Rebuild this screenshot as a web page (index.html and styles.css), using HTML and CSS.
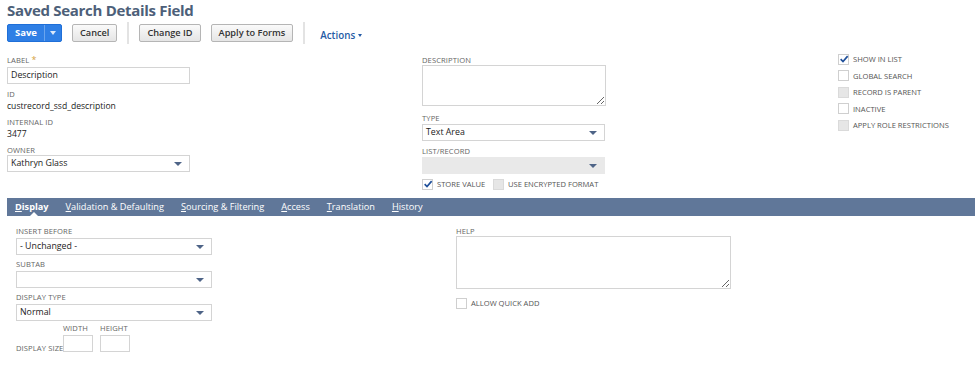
FILE: index.html
```html
<!DOCTYPE html>
<html lang="en">
<head>
    <meta charset="UTF-8">
    <title>Saved Search Details Field</title>
    <link rel="stylesheet" href="styles.css">
</head>
<body>
    <h1 class="page-title">Saved Search Details Field</h1>

    <div class="toolbar">
        <div class="btn-split">
            <span class="btn-save">Save</span>
            <span class="btn-save-menu"><i class="tri tri-white"></i></span>
        </div>
        <span class="btn">Cancel</span>
        <span class="sep"></span>
        <span class="btn">Change ID</span>
        <span class="btn">Apply to Forms</span>
        <span class="sep"></span>
        <span class="actions">Actions <i class="tri tri-blue"></i></span>
    </div>

    <!-- Main fields -->
    <div class="main-fields">
        <div class="col col-left">
            <div class="field">
                <div class="lbl">Label <span class="req">*</span></div>
                <div class="input">Description</div>
            </div>
            <div class="field">
                <div class="lbl">ID</div>
                <div class="val">custrecord_ssd_description</div>
            </div>
            <div class="field">
                <div class="lbl">Internal ID</div>
                <div class="val">3477</div>
            </div>
            <div class="field">
                <div class="lbl">Owner</div>
                <div class="select">Kathryn Glass<i class="tri tri-dark"></i></div>
            </div>
        </div>

        <div class="col col-mid">
            <div class="field">
                <div class="lbl">Description</div>
                <textarea class="area area-desc"></textarea>
            </div>
            <div class="field">
                <div class="lbl">Type</div>
                <div class="select">Text Area<i class="tri tri-dark"></i></div>
            </div>
            <div class="field">
                <div class="lbl">List/Record</div>
                <div class="select disabled"><i class="tri tri-dark"></i></div>
            </div>
            <div class="check-row">
                <label class="chk"><span class="box checked"><svg viewBox="0 0 12 12"><path d="M2 6.2 L4.8 9 L10.4 2.6" /></svg></span>Store value</label>
                <label class="chk"><span class="box disabled"></span>Use encrypted format</label>
            </div>
        </div>

        <div class="col col-right">
            <label class="chk"><span class="box checked"><svg viewBox="0 0 12 12"><path d="M2 6.2 L4.8 9 L10.4 2.6" /></svg></span>Show in list</label>
            <label class="chk"><span class="box"></span>Global search</label>
            <label class="chk"><span class="box disabled"></span>Record is parent</label>
            <label class="chk"><span class="box"></span>Inactive</label>
            <label class="chk"><span class="box disabled"></span>Apply role restrictions</label>
        </div>
    </div>

    <!-- Subtabs -->
    <div class="tabs">
        <span class="tab active"><u>D</u>isplay</span>
        <span class="tab"><u>V</u>alidation &amp; Defaulting</span>
        <span class="tab"><u>S</u>ourcing &amp; Filtering</span>
        <span class="tab"><u>A</u>ccess</span>
        <span class="tab"><u>T</u>ranslation</span>
        <span class="tab"><u>H</u>istory</span>
    </div>

    <div class="tab-body">
        <div class="col col-display">
            <div class="field">
                <div class="lbl">Insert before</div>
                <div class="select wide">- Unchanged -<i class="tri tri-dark"></i></div>
            </div>
            <div class="field">
                <div class="lbl">Subtab</div>
                <div class="select wide"><i class="tri tri-dark"></i></div>
            </div>
            <div class="field">
                <div class="lbl">Display type</div>
                <div class="select wide">Normal<i class="tri tri-dark"></i></div>
            </div>
            <div class="size-row">
                <div class="lbl size-lbl">Display size</div>
                <div class="size-field">
                    <div class="lbl">Width</div>
                    <div class="input small"></div>
                </div>
                <div class="size-field">
                    <div class="lbl">Height</div>
                    <div class="input small"></div>
                </div>
            </div>
        </div>

        <div class="col col-help">
            <div class="field">
                <div class="lbl">Help</div>
                <textarea class="area area-help"></textarea>
            </div>
            <label class="chk"><span class="box"></span>Allow quick add</label>
        </div>
    </div>
</body>
</html>
```

FILE: styles.css
```css
html, body {
    margin: 0;
    padding: 0;
    background: #fff;
    font-family: "Open Sans", "Liberation Sans", sans-serif;
    color: #262626;
}
.page-title {
    margin: 0;
    padding: 0 0 0 7px;
    font-size: 15px;
    letter-spacing: -0.3px;
    line-height: 20px;
    font-weight: 700;
    color: #4d5f79;
}

/* toolbar */
.toolbar {
    display: flex;
    align-items: center;
    padding: 3px 0 0 7px;
    height: 20px;
}
.btn-split {
    display: flex;
    height: 18px;
    border-radius: 2px;
    overflow: hidden;
    background: #2f7fe5;
    border: 1px solid #1f6fd8;
    box-sizing: border-box;
}
.btn-save {
    width: 36px;
    color: #fff;
    font-size: 9.5px;
    font-weight: 700;
    line-height: 16px;
    text-align: center;
}
.btn-save-menu {
    width: 16px;
    border-left: 1px solid #6aa5ee;
    display: flex;
    align-items: center;
    justify-content: center;
}
.btn {
    height: 18px;
    box-sizing: border-box;
    padding: 0 7px;
    margin-left: 10px;
    border: 1px solid #b5b5b5;
    border-radius: 2px;
    background: linear-gradient(#fafafa, #e5e5e5);
    font-size: 9.2px;
    font-weight: 600;
    line-height: 16px;
    color: #333;
}
.sep {
    width: 2px;
    height: 22px;
    background: #e3e3e3;
    margin-left: 10px;
}
.actions {
    margin-left: 15px;
    margin-top: 5px;
    font-size: 9.8px;
    font-weight: 600;
    color: #255ba5;
}

/* triangles */
.tri {
    display: inline-block;
    width: 0;
    height: 0;
    border-left: 3px solid transparent;
    border-right: 3px solid transparent;
    border-top: 4px solid #fff;
}
.tri-white { border-top-color: #dde9fa; }
.tri-blue {
    border-top-color: #255ba5;
    border-left-width: 2.5px;
    border-right-width: 2.5px;
    border-top-width: 3px;
    vertical-align: 2px;
}
.tri-dark {
    position: absolute;
    right: 7px;
    top: 6px;
    border-left-width: 4.5px;
    border-right-width: 4.5px;
    border-top: 4px solid #4e6487;
}

/* fields */
.main-fields {
    display: grid;
    grid-template-columns: 415px 416px 1fr;
    padding: 12px 0 0 7px;
    height: 143px;
}
.field {
    margin-bottom: 6px;
}
.lbl {
    font-size: 7.6px;
    line-height: 10px;
    text-transform: uppercase;
    color: #666;
    letter-spacing: 0.1px;
}
.req {
    color: #d5a13d;
    font-size: 9px;
}
.val {
    font-size: 8.6px;
    line-height: 15px;
    color: #222;
}
.input, .select {
    position: relative;
    box-sizing: border-box;
    width: 183px;
    height: 17px;
    margin-top: 2px;
    border: 1px solid #d4d4d4;
    background: #fff;
    font-size: 8.8px;
    line-height: 15px;
    padding-left: 3px;
    color: #222;
}
.select.disabled {
    background: #e9e9e9;
    border-color: #e9e9e9;
}
.select.wide {
    width: 196px;
}
.input.small {
    width: 30px;
    height: 17px;
}
.area {
    display: block;
    box-sizing: border-box;
    border: 1px solid #d4d4d4;
    margin: 0;
    padding: 0;
    font-family: inherit;
    resize: both;
}
.area-desc {
    width: 184px;
    height: 41px;
    margin-bottom: 7px;
}
.area-help {
    width: 275px;
    height: 53px;
}
.col-left .field:nth-child(1) { margin-bottom: 5px; }
.col-left .field:nth-child(2),
.col-left .field:nth-child(3) { margin-bottom: 3px; }
.col-left .field:nth-child(4) .select { margin-top: 0; }
.col-mid .field { margin-bottom: 5px; }
.col-mid .select { margin-top: 1px; }

/* checkboxes */
.chk {
    display: flex;
    align-items: center;
    font-size: 7.6px;
    text-transform: uppercase;
    color: #555;
    height: 16.5px;
}
.box {
    width: 11px;
    height: 11px;
    box-sizing: border-box;
    border: 1px solid #cfcfcf;
    background: #fff;
    margin-right: 4px;
    position: relative;
}
.box.disabled {
    background: #e6e6e6;
    border-color: #dadada;
}
.box svg {
    position: absolute;
    left: 0;
    top: -1px;
    width: 10px;
    height: 10px;
    fill: none;
    stroke: #1f4f9a;
    stroke-width: 2;
}
.check-row {
    display: flex;
    gap: 4px;
    margin-top: -3px;
}
.check-row .chk:first-child { width: 67px; }
.col-right {
    margin-top: -4px;
}

/* tabs */
.tabs {
    display: flex;
    align-items: center;
    margin-left: 7px;
    height: 18px;
    background: #607799;
    padding-left: 8px;
}
.tab {
    position: relative;
    color: #fff;
    font-size: 9.2px;
    font-weight: 400;
    margin-right: 17px;
    line-height: 18px;
}
.tab.active {
    font-weight: 700;
}
.tab.active::after {
    content: "";
    position: absolute;
    left: 15px;
    bottom: 0;
    border-left: 4px solid transparent;
    border-right: 4px solid transparent;
    border-bottom: 4px solid #fff;
}

/* display tab body */
.tab-body {
    display: grid;
    grid-template-columns: 440px 1fr;
    padding: 10px 0 0 16px;
}
.col-display .field { margin-bottom: 4px; }
.size-row {
    display: flex;
    align-items: flex-end;
    margin-top: -2px;
}
.size-lbl {
    width: 47px;
    white-space: nowrap;
    margin-bottom: -1px;
}
.size-field {
    margin-right: 7px;
}
.col-help .chk {
    margin-top: 2px;
}
```
